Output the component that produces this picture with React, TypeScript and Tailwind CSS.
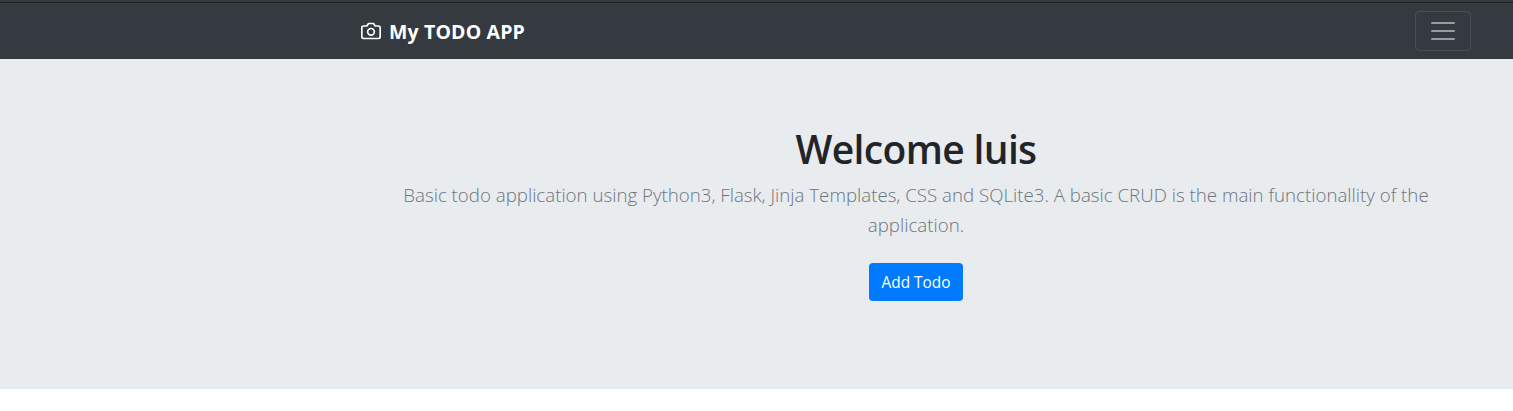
export default function App() {
  return (
    <div className="min-h-[411px] bg-white font-['Open_Sans','Noto_Sans',sans-serif] text-[#212529]">
      <div className="h-[3px] border-b border-[#1d2124] bg-[#343a3d]" />
      <header className="flex h-14 items-center justify-between bg-[#343a40] pl-[361px] pr-[42px]">
        <a className="flex items-center text-white">
          <svg className="mr-2 h-5 w-5" viewBox="0 0 24 24" fill="none" stroke="currentColor" strokeWidth="2" strokeLinecap="round" strokeLinejoin="round">
            <path d="M23 19a2 2 0 0 1-2 2H3a2 2 0 0 1-2-2V8a2 2 0 0 1 2-2h4l2-3h6l2 3h4a2 2 0 0 1 2 2z" />
            <circle cx="12" cy="13" r="4" />
          </svg>
          <span className="whitespace-nowrap pt-0.5 text-[19.5px] font-bold leading-[30px] tracking-[0.15px]">My TODO APP</span>
        </a>
        <button className="flex h-10 w-14 items-center justify-center rounded border border-white/10">
          <svg className="h-[30px] w-[30px]" viewBox="0 0 30 30" stroke="rgba(255,255,255,0.5)" strokeWidth="2" strokeLinecap="round">
            <path d="M4 7h22M4 15h22M4 23h22" />
          </svg>
        </button>
      </header>
      <section className="flex h-[330px] flex-col items-center bg-[#e8ecef] pl-[361px] pr-[42px] pt-[65px] text-center">
        <h1 className="mb-[7px] text-[39px] font-[550] leading-[49px] tracking-[-0.65px]">Welcome luis</h1>
        <p className="whitespace-nowrap text-[18.7px] font-light leading-[30px] text-[#6c757d]">
          Basic todo application using Python3, Flask, Jinja Templates, CSS and SQLite3. A basic CRUD is the main functionallity of the
          <br />
          application.
        </p>
        <button className="mt-[23px] h-[38px] w-[94px] rounded bg-[#007bff] pt-0.5 text-[15.4px] text-white">Add Todo</button>
      </section>
    </div>
  );
}
